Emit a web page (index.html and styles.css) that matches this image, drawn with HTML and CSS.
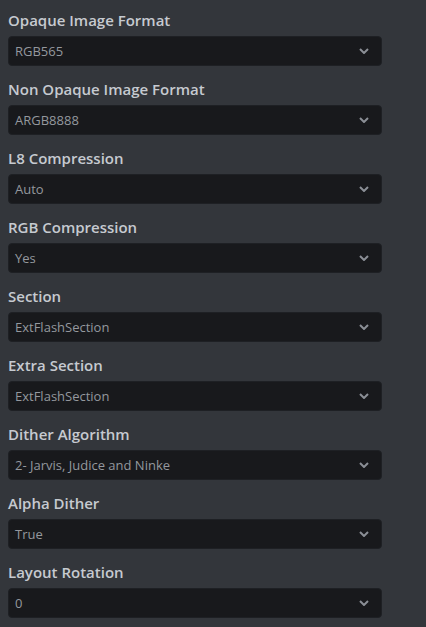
FILE: index.html
```html
<!DOCTYPE html>
<html>
<head>
<meta charset="utf-8">
<link rel="stylesheet" href="styles.css">
</head>
<body>
<div class="panel">
  <div class="field"><div class="label">Opaque Image Format</div><div class="select"><span class="value">RGB565</span><svg class="chev" viewBox="0 0 10 6"><path d="M1 1l4 4 4-4"/></svg></div></div>
  <div class="field"><div class="label">Non Opaque Image Format</div><div class="select"><span class="value">ARGB8888</span><svg class="chev" viewBox="0 0 10 6"><path d="M1 1l4 4 4-4"/></svg></div></div>
  <div class="field"><div class="label">L8 Compression</div><div class="select"><span class="value">Auto</span><svg class="chev" viewBox="0 0 10 6"><path d="M1 1l4 4 4-4"/></svg></div></div>
  <div class="field"><div class="label">RGB Compression</div><div class="select"><span class="value">Yes</span><svg class="chev" viewBox="0 0 10 6"><path d="M1 1l4 4 4-4"/></svg></div></div>
  <div class="field"><div class="label">Section</div><div class="select"><span class="value">ExtFlashSection</span><svg class="chev" viewBox="0 0 10 6"><path d="M1 1l4 4 4-4"/></svg></div></div>
  <div class="field"><div class="label">Extra Section</div><div class="select"><span class="value">ExtFlashSection</span><svg class="chev" viewBox="0 0 10 6"><path d="M1 1l4 4 4-4"/></svg></div></div>
  <div class="field"><div class="label">Dither Algorithm</div><div class="select"><span class="value">2- Jarvis, Judice and Ninke</span><svg class="chev" viewBox="0 0 10 6"><path d="M1 1l4 4 4-4"/></svg></div></div>
  <div class="field"><div class="label">Alpha Dither</div><div class="select"><span class="value">True</span><svg class="chev" viewBox="0 0 10 6"><path d="M1 1l4 4 4-4"/></svg></div></div>
  <div class="field"><div class="label">Layout Rotation</div><div class="select"><span class="value">0</span><svg class="chev" viewBox="0 0 10 6"><path d="M1 1l4 4 4-4"/></svg></div></div>
</div>
</body>
</html>
```
FILE: styles.css
```css
html, body {
  margin: 0;
  padding: 0;
  background: #33363b;
  height: 100%;
}
body {
  font-family: "Open Sans", "Noto Sans", sans-serif;
}
.panel {
  padding: 10px 44px 0 8px;
  display: flex;
  flex-direction: column;
  gap: 13px;
}
.field {
  display: flex;
  flex-direction: column;
  gap: 6px;
}
.label {
  font-size: 15px;
  font-weight: 600;
  line-height: 20px;
  color: #c6cad0;
}
.select {
  height: 30px;
  box-sizing: border-box;
  background: #18191c;
  border: 1px solid #1e2024;
  border-radius: 4px;
  display: flex;
  align-items: center;
  justify-content: space-between;
  padding: 0 12px 0 6px;
}
.value {
  font-size: 13px;
  color: #94989e;
}
.chev {
  width: 10px;
  height: 6px;
  fill: none;
  stroke: #8b8f96;
  stroke-width: 2;
}
```
